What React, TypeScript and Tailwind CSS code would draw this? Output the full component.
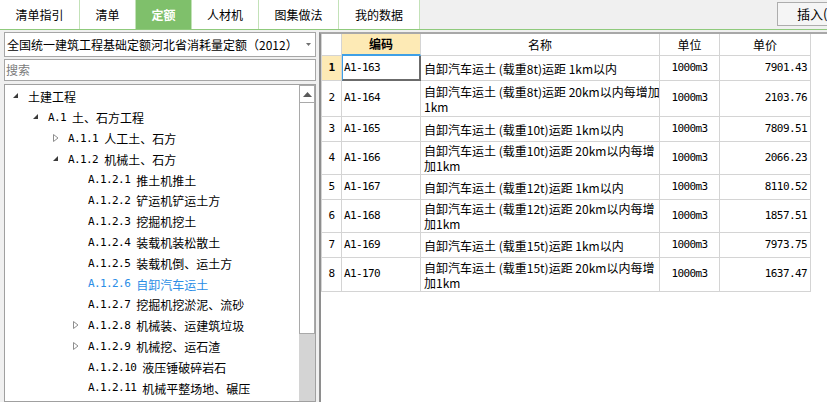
const tabs = [
  { label: "清单指引", w: "w-[80px]" },
  { label: "清单", w: "w-[56px]" },
  { label: "定额", w: "w-[56px]", active: true },
  { label: "人材机", w: "w-[67px]" },
  { label: "图集做法", w: "w-[80px]" },
  { label: "我的数据", w: "w-[81px]" },
];

type Node = { lvl: 0 | 1 | 2 | 3; icon?: "open" | "closed"; code?: string; label: string; sel?: boolean };

const tree: Node[] = [
  { lvl: 0, icon: "open", label: "土建工程" },
  { lvl: 1, icon: "open", code: "A.1", label: "土、石方工程" },
  { lvl: 2, icon: "closed", code: "A.1.1", label: "人工土、石方" },
  { lvl: 2, icon: "open", code: "A.1.2", label: "机械土、石方" },
  { lvl: 3, code: "A.1.2.1", label: "推土机推土" },
  { lvl: 3, code: "A.1.2.2", label: "铲运机铲运土方" },
  { lvl: 3, code: "A.1.2.3", label: "挖掘机挖土" },
  { lvl: 3, code: "A.1.2.4", label: "装载机装松散土" },
  { lvl: 3, code: "A.1.2.5", label: "装载机倒、运土方" },
  { lvl: 3, code: "A.1.2.6", label: "自卸汽车运土", sel: true },
  { lvl: 3, code: "A.1.2.7", label: "挖掘机挖淤泥、流砂" },
  { lvl: 3, icon: "closed", code: "A.1.2.8", label: "机械装、运建筑垃圾" },
  { lvl: 3, icon: "closed", code: "A.1.2.9", label: "机械挖、运石渣" },
  { lvl: 3, code: "A.1.2.10", label: "液压锤破碎岩石" },
  { lvl: 3, code: "A.1.2.11", label: "机械平整场地、碾压" },
];

const indent = ["pl-[8px]", "pl-[28px]", "pl-[48px]", "pl-[68px]"];

const rows = [
  { n: "1", code: "A1-163", name: ["自卸汽车运土 (载重8t)运距 1km以内"], price: "7901.43", h: "h-[25px]" },
  { n: "2", code: "A1-164", name: ["自卸汽车运土 (载重8t)运距 20km以内每增加", "1km"], price: "2103.76", h: "h-[36px]" },
  { n: "3", code: "A1-165", name: ["自卸汽车运土 (载重10t)运距 1km以内"], price: "7809.51", h: "h-[25px]" },
  { n: "4", code: "A1-166", name: ["自卸汽车运土 (载重10t)运距 20km以内每增", "加1km"], price: "2066.23", h: "h-[33px]" },
  { n: "5", code: "A1-167", name: ["自卸汽车运土 (载重12t)运距 1km以内"], price: "8110.52", h: "h-[25px]" },
  { n: "6", code: "A1-168", name: ["自卸汽车运土 (载重12t)运距 20km以内每增", "加1km"], price: "1857.51", h: "h-[33px]" },
  { n: "7", code: "A1-169", name: ["自卸汽车运土 (载重15t)运距 1km以内"], price: "7973.75", h: "h-[25px]" },
  { n: "8", code: "A1-170", name: ["自卸汽车运土 (载重15t)运距 20km以内每增", "加1km"], price: "1637.47", h: "h-[34px]" },
];

const mono = "font-['DejaVu_Sans_Mono',monospace] text-[11px] tracking-[-0.6px]";

function TreeIcon({ kind }: { kind?: "open" | "closed" }) {
  return (
    <div className="w-[15px] h-full flex items-center shrink-0">
      {kind === "open" && (
        <svg width="5" height="5" viewBox="0 0 5 5" className="-mt-[3px]">
          <path d="M5 0V5H0Z" fill="#3a3a3a" />
        </svg>
      )}
      {kind === "closed" && (
        <svg width="6" height="8" viewBox="0 0 6 8" className="-mt-[2px]">
          <path d="M0.5 0.5L5 4L0.5 7.5Z" fill="#fff" stroke="#8e8e8e" strokeWidth="1" />
        </svg>
      )}
    </div>
  );
}

export default function App() {
  return (
    <div className="w-[827px] h-[402px] overflow-hidden bg-[#f0f0f0] font-['Noto_Sans_CJK_SC',sans-serif] text-[12px] text-black flex flex-col">
      {/* tab bar */}
      <div className="h-[30px] shrink-0 flex border-b border-[#8fca7c]">
        {tabs.map((t) => (
          <div
            key={t.label}
            className={`${t.w} h-full flex items-center justify-center border-r border-[#c3e2b8] ${
              t.active ? "bg-[#7fc06b] text-white font-bold" : "bg-white"
            }`}
          >
            {t.label}
          </div>
        ))}
        <div className="flex-1" />
        <div className="self-start mt-[2px] h-[24px] w-[70px] mr-[-20px] border border-[#adadad] bg-[#f5f5f5] flex items-center pl-[19px] text-[13px] whitespace-nowrap">
          插入(I)
        </div>
      </div>

      <div className="flex-1 min-h-0 flex pt-[2px]">
        {/* left panel */}
        <div className="w-[316px] shrink-0 pl-[4px] flex flex-col">
          <div className="h-[25px] shrink-0 border border-[#a6a6a6] bg-white flex items-center pl-[2px] pr-[4px]">
            <span className="whitespace-nowrap">全国统一建筑工程基础定额河北省消耗量定额（2012）</span>
            <svg width="5" height="3" viewBox="0 0 5 3" className="ml-auto">
              <path d="M0 0H5L2.5 3Z" fill="#707070" />
            </svg>
          </div>
          <div className="mt-[2px] h-[22px] shrink-0 border border-[#a6a6a6] bg-white flex items-center pl-[1px] text-[#7b7b7b]">
            搜索
          </div>
          <div className="mt-[3px] flex-1 min-h-0 border border-[#a0a0a0] bg-white flex overflow-hidden">
            <div className="flex-1 pt-[2px]">
              {tree.map((n) => (
                <div key={n.label} className={`h-[20.8px] flex items-center whitespace-nowrap ${indent[n.lvl]} ${n.sel ? "text-[#2a8de6]" : ""}`}>
                  <TreeIcon kind={n.icon} />
                  {n.code && <span className={mono}>{n.code}</span>}
                  <span className={n.code ? "ml-[6px]" : ""}>{n.label}</span>
                </div>
              ))}
            </div>
            <div className="w-[16px] shrink-0 flex flex-col">
              <div className="h-[18px] shrink-0 border border-[#a9a9a9] bg-white flex items-center justify-center">
                <svg width="9" height="5" viewBox="0 0 9 5">
                  <path d="M4.5 0L9 5H0Z" fill="#5a5a5a" />
                </svg>
              </div>
              <div className="h-[231px] shrink-0 border-x border-b border-[#a9a9a9] bg-white" />
              <div className="flex-1 bg-[#d4d4d4]" />
            </div>
          </div>
        </div>

        {/* right panel */}
        <div className="ml-[3px] flex-1 bg-white border-l-2 border-t-2 border-l-[#8e8e8e] border-t-[#a8a8a8]">
          <div className="w-[490px] border-l border-[#d4d4d4]">
            <div className="h-[22px] flex border-b border-[#d4d4d4]">
              <div className="w-[20px] border-r border-[#d4d4d4]" />
              <div className="w-[79px] border-r border-[#d4d4d4] bg-[#fdeab5] border-b-2 border-b-[#3fa0e6] flex items-center justify-center font-bold -mb-px">
                编码
              </div>
              <div className="w-[239px] border-r border-[#d4d4d4] flex items-center justify-center">名称</div>
              <div className="w-[60px] border-r border-[#d4d4d4] flex items-center justify-center">单位</div>
              <div className="w-[91px] border-r border-[#d4d4d4] flex items-center justify-center">单价</div>
            </div>
            {rows.map((r, i) => (
              <div key={r.n} className={`${r.h} flex border-b border-[#d4d4d4]`}>
                <div
                  className={`w-[20px] border-r border-[#d4d4d4] flex items-center justify-center ${mono} ${
                    i === 0 ? "bg-[#fdeab5] font-bold" : ""
                  }`}
                >
                  {r.n}
                </div>
                <div className={`relative w-[79px] border-r border-[#d4d4d4] flex items-center pl-[2px] ${mono}`}>
                  {r.code}
                  {i === 0 && (
                    <div className="absolute top-0 left-0 -right-px -bottom-px border-l border-r-2 border-b-2 border-l-[#3fa0e6] border-r-[#6b6b6b] border-b-[#6b6b6b]" />
                  )}
                </div>
                <div className="w-[239px] border-r border-[#d4d4d4] flex flex-col justify-center pl-[3px] leading-[15px] overflow-hidden">
                  {r.name.map((l) => (
                    <div key={l} className="whitespace-nowrap">{l}</div>
                  ))}
                </div>
                <div className={`w-[60px] border-r border-[#d4d4d4] flex items-center justify-center ${mono}`}>1000m3</div>
                <div className={`w-[91px] border-r border-[#d4d4d4] flex items-center justify-end pr-[3px] ${mono}`}>{r.price}</div>
              </div>
            ))}
          </div>
        </div>
      </div>
    </div>
  );
}
